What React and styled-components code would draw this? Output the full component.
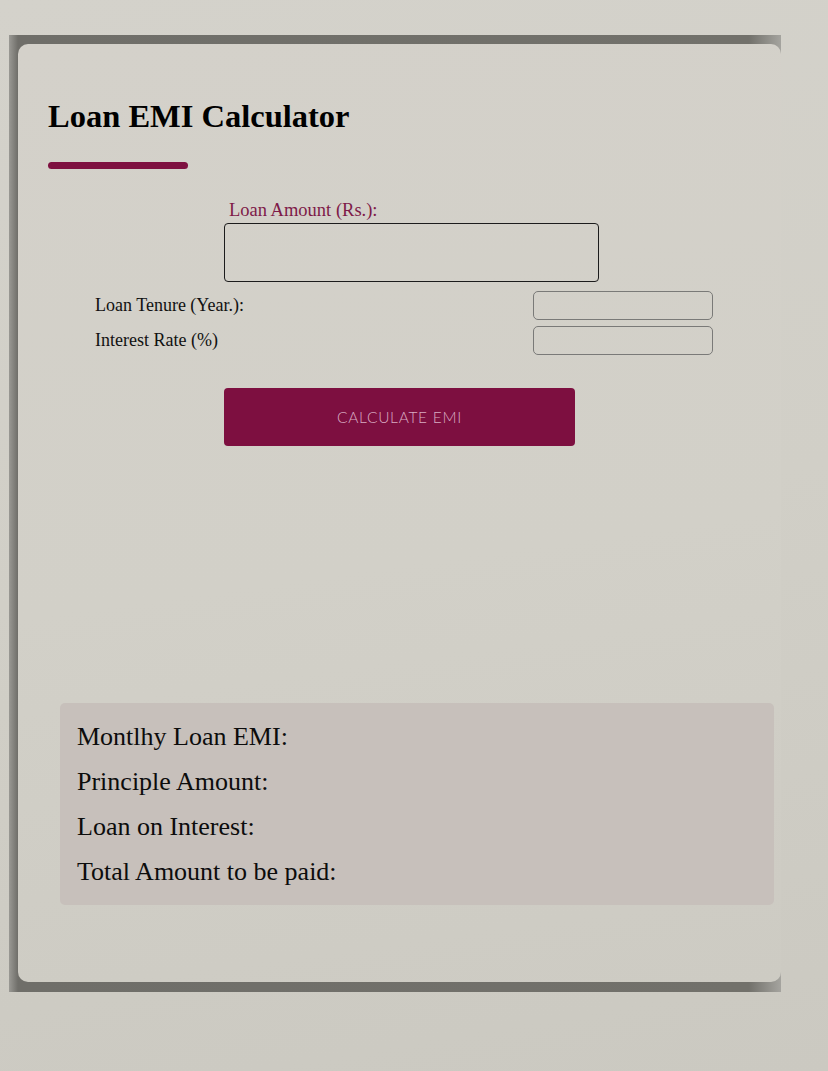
import styled, { createGlobalStyle } from 'styled-components'

const GlobalStyle = createGlobalStyle`
  html, body {
    margin: 0;
    padding: 0;
    min-height: 100%;
  }

  body {
    min-height: 1071px;
    background: linear-gradient(170deg, #d4d2cb 0%, #d1cfc7 50%, #cbc9c1 100%);
    font-family: "Liberation Serif", "Times New Roman", serif;
  }
`;

const Frame = styled.div`
  box-sizing: border-box;
  width: 772px;
  margin: 35px 0 0 9px;
  padding: 9px 0 10px 9px;
  overflow: hidden;
  background: linear-gradient(to right, #9a9994 0, #6f6e69 9px, #72716b 740px, #a5a49f 772px);
`;

const Card = styled.main`
  box-sizing: border-box;
  width: 763px;
  padding: 54px 30px 77px 30px;
  border-radius: 10px;
  background: linear-gradient(172deg, #d4d1ca 0%, #d2d0c8 55%, #cdcbc3 100%);
`;

const Title = styled.h1`
  margin: 0;
  font-size: 32.5px;
  font-weight: bold;
  color: #000;
`;

const Accent = styled.div`
  width: 140px;
  height: 7px;
  margin-top: 27px;
  border-radius: 4px;
  background: #7e1040;
`;

const AmountField = styled.div`
  display: flex;
  flex-direction: column;
  margin: 31px 0 0 176px;
`;

const AmountLabel = styled.label`
  margin-left: 5px;
  font-size: 18.5px;
  color: #7e1a48;
`;

const AmountInput = styled.input`
  box-sizing: border-box;
  width: 375px;
  height: 59px;
  margin-top: 2px;
  border: 1.5px solid #1c1c1c;
  border-radius: 4px;
  background: transparent;
`;

const Rows = styled.div`
  display: flex;
  flex-direction: column;
  gap: 6px;
  width: 618px;
  margin: 9px 0 0 47px;
`;

const Row = styled.div`
  display: flex;
  align-items: center;
  justify-content: space-between;
`;

const RowLabel = styled.label`
  font-size: 18px;
  color: #111;
`;

const SmallInput = styled.input`
  box-sizing: border-box;
  width: 180px;
  height: 29px;
  border: 1px solid #7a7a78;
  border-radius: 5px;
  background: transparent;
`;

const CalcButton = styled.button`
  display: block;
  width: 351px;
  height: 58px;
  margin: 33px auto 0;
  border: none;
  border-radius: 4px;
  background: #7d0f40;
  color: #d9abc2;
  font-family: Lato, "Open Sans", sans-serif;
  font-weight: 300;
  font-size: 15.5px;
  letter-spacing: 0.7px;
  cursor: pointer;
`;

const Results = styled.section`
  box-sizing: border-box;
  width: 714px;
  margin: 257px 0 0 12px;
  padding: 19px 17px 18px;
  border-radius: 5px;
  background: #c7c0bb;
`;

const ResultLine = styled.p`
  margin: 0;
  font-size: 26px;
  color: #0c0c0c;

  & + & {
    margin-top: 15px;
  }
`;

export default function App() {
  return (
    <>
      <GlobalStyle />
      <Frame>
        <Card>
          <Title>Loan EMI Calculator</Title>
          <Accent />
          <AmountField>
            <AmountLabel htmlFor="amount">Loan Amount (Rs.):</AmountLabel>
            <AmountInput id="amount" type="text" />
          </AmountField>
          <Rows>
            <Row>
              <RowLabel htmlFor="tenure">Loan Tenure (Year.):</RowLabel>
              <SmallInput id="tenure" type="text" />
            </Row>
            <Row>
              <RowLabel htmlFor="rate">Interest Rate (%)</RowLabel>
              <SmallInput id="rate" type="text" />
            </Row>
          </Rows>
          <CalcButton>CALCULATE EMI</CalcButton>
          <Results>
            <ResultLine>Montlhy Loan EMI:</ResultLine>
            <ResultLine>Principle Amount:</ResultLine>
            <ResultLine>Loan on Interest:</ResultLine>
            <ResultLine>Total Amount to be paid:</ResultLine>
          </Results>
        </Card>
      </Frame>
    </>
  )
}
